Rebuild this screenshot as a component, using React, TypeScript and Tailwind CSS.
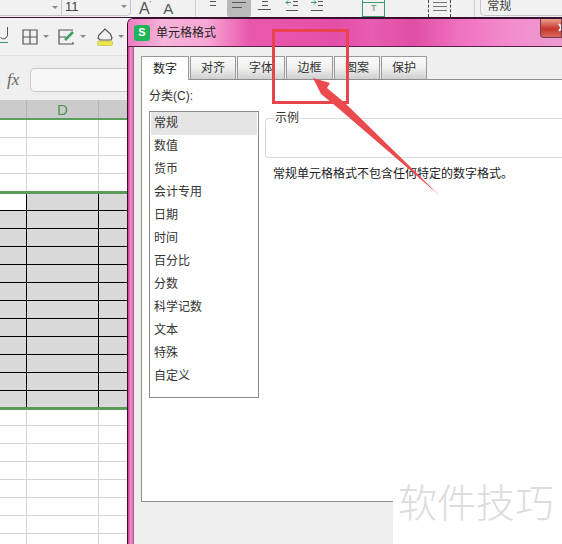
const categories = ["常规", "数值", "货币", "会计专用", "日期", "时间", "百分比", "分数", "科学记数", "文本", "特殊", "自定义"];
const tabs = [
  { label: "对齐", w: "w-[46px]" },
  { label: "字体", w: "w-[48px]" },
  { label: "边框", w: "w-[47px]" },
  { label: "图案", w: "w-[46px]" },
  { label: "保护", w: "w-[46px]" },
];
const font = "font-['Liberation_Sans','Noto_Sans_CJK_SC',sans-serif]";

function Caret({ className = "" }: { className?: string }) {
  return <div className={`w-0 h-0 border-x-[3px] border-t-[3px] border-x-transparent border-t-[#888] ${className}`} />;
}

function Lines({ rows, className = "" }: { rows: string[]; className?: string }) {
  // tiny alignment glyphs in the ribbon
  return (
    <div className={`flex flex-col gap-[3px] ${className}`}>
      {rows.map((w, i) => (
        <div key={i} className={`h-px bg-[#555] ${w}`} />
      ))}
    </div>
  );
}

function GridRow({ h, line, first = "bg-white", rest = "bg-white", col }: { h: string; line: string; first?: string; rest?: string; col: string }) {
  return (
    <div className={`flex shrink-0 ${h} ${line}`}>
      <div className={`w-[27px] border-r ${col} ${first}`} />
      <div className={`w-[72px] border-r ${col} ${rest}`} />
      <div className={`flex-1 ${rest}`} />
    </div>
  );
}

function Sheet() {
  return (
    <div className="flex flex-col flex-1">
      <div className="flex shrink-0 h-[20px] bg-[#cbcbcb] border-b-2 border-[#5c9e5e]">
        <div className="w-[27px] border-r border-[#b5b5b5]" />
        <div className="w-[72px] border-r border-[#b5b5b5] flex items-center justify-center text-[15px] leading-none text-[#4f9153]">D</div>
      </div>
      {[0, 1, 2].map((i) => (
        <GridRow key={i} h="h-[18px]" line="border-b border-[#d4d4d4]" col="border-[#d4d4d4]" />
      ))}
      <GridRow h="h-[17px]" line="" col="border-[#d4d4d4]" />
      <div className="h-[3px] shrink-0 bg-[#5a9c58]" />
      <GridRow h="h-[17px]" line="border-b border-black" rest="bg-[#d9d9d9]" col="border-black" />
      {[0, 1, 2, 3, 4, 5, 6, 7, 8, 9].map((i) => (
        <GridRow key={i} h="h-[18px]" line="border-b border-black" first="bg-[#d9d9d9]" rest="bg-[#d9d9d9]" col="border-black" />
      ))}
      <GridRow h="h-[16px]" line="" first="bg-[#d9d9d9]" rest="bg-[#d9d9d9]" col="border-black" />
      <div className="h-[3px] shrink-0 bg-[#5a9c58]" />
      <GridRow h="h-[16px]" line="border-b border-[#d4d4d4]" col="border-[#d4d4d4]" />
      {[0, 1, 2, 3, 4, 5, 6].map((i) => (
        <GridRow key={i} h="h-[18px]" line="border-b border-[#d4d4d4]" col="border-[#d4d4d4]" />
      ))}
    </div>
  );
}

function LeftPane() {
  return (
    <div className="w-[127px] shrink-0 flex flex-col overflow-hidden">
      <div className="h-[37px] shrink-0 bg-[#f1f1f1] flex items-center">
        <svg width="9" height="17" viewBox="0 0 9 17" className="mt-[-2px]">
          <path d="M7.5 0v8a4 4 0 0 1-7 2.5" fill="none" stroke="#555" strokeWidth="1" />
          <path d="M0 15.5h8" stroke="#3f9a5d" strokeWidth="1" />
        </svg>
        <svg width="16" height="16" viewBox="0 0 16 16" className="ml-[13px]">
          <path d="M1 1h14v14H1zM8 1v14M1 8h14" fill="none" stroke="#555" strokeWidth="1.2" />
        </svg>
        <Caret className="ml-[5px]" />
        <svg width="17" height="16" viewBox="0 0 17 16" className="ml-[9px]">
          <path d="M15 1H1v14h14v-2M1 8h7" fill="none" stroke="#555" strokeWidth="1.2" />
          <path d="M7 11l8-8" stroke="#3fa066" strokeWidth="2.5" />
        </svg>
        <Caret className="ml-[5px]" />
        <svg width="18" height="18" viewBox="0 0 18 18" className="ml-[10px]">
          <path d="M9 1l5.500 5 1.500 4-1 2H4l-2-2 1-3z" fill="none" stroke="#555" strokeWidth="1.2" />
          <rect x="1.500" y="13" width="15" height="4.500" rx="1.500" fill="#ece64f" stroke="#b9b53a" strokeWidth="0.6" />
        </svg>
        <Caret className="ml-[4px]" />
      </div>
      <div className="h-[1px] shrink-0 bg-[#e0e0e0]" />
      <div className="h-[44px] shrink-0 bg-[#efefef] flex items-center pt-[3px] pl-[7px] gap-[8px]">
        <span className="font-['Liberation_Serif',serif] italic text-[17px] text-[#666] w-[15px]">fx</span>
        <div className="h-[24px] flex-1 bg-[#f7f7f7] border border-r-0 border-[#c8c8c8] rounded-l-[5px]" />
      </div>
      <Sheet />
    </div>
  );
}

function Dialog() {
  return (
    <div className="flex-1 flex flex-col bg-[linear-gradient(90deg,#c93c90_0px,#f994d2_3px,#e858ad_5px)] border-l border-t border-[#3a1030] rounded-tl-[6px] overflow-hidden">
      <div className="h-[28px] shrink-0 flex items-center bg-[linear-gradient(90deg,#ee7cc2_0%,#f6b4da_8%,#f7a8d5_18%,#ea58ae_28%,#e54ea8_48%,#e85cb2_56%,#e04ea6_66%,#f070c0_76%,#f38ccc_88%,#eb9ccf_100%)] border-b border-[#5a2048]">
        <div className="w-4 h-4 ml-[6px] rounded-[3px] bg-[#1fb45a] flex items-center justify-center text-white text-[11px] font-bold leading-none">S</div>
        <span className="ml-[6px] text-[12px] text-[#222]">单元格格式</span>
        <div className="ml-auto self-start w-[22px] h-[19px] rounded-bl-[4px] border border-t-0 border-[#7a3a4a] bg-[linear-gradient(180deg,#e9a090_0%,#c8342c_55%,#d86a60_100%)] overflow-hidden">
          <svg width="22" height="19" viewBox="0 0 22 19">
            <path d="M18 5l5 7M23 5l-5 7" stroke="#fff" strokeWidth="2" />
          </svg>
        </div>
      </div>
      <div className="flex-1 ml-[5px] bg-[#efefef] border-l border-[#8a7a85] flex flex-col">
        <div className="h-[32px] shrink-0 pl-[7px] flex items-end gap-[1px]">
          <div className="w-[48px] h-[24px] mb-[-1px] relative z-10 bg-white border border-b-0 border-[#999] flex items-center justify-center text-[12px] text-[#222]">数字</div>
          {tabs.map((t) => (
            <div key={t.label} className={`${t.w} h-[23px] bg-[linear-gradient(180deg,#fafafa_0%,#f0f0f0_50%,#cfcfcf_100%)] border border-b-0 border-[#9a9a9a] flex items-center justify-center text-[12px] text-[#333]`}>{t.label}</div>
          ))}
        </div>
        <div className="h-[423px] shrink-0 ml-[7px] bg-white border border-r-0 border-[#8e8e8e] pl-[7px] flex gap-[6px]">
          <div className="w-[110px] shrink-0">
            <div className="h-[31px] flex items-end pb-[6px] text-[12px] leading-[17px] text-[#333]">分类(C):</div>
            <div className="h-[287px] border border-[#8c8c8c] px-px">
              {categories.map((c, i) => (
                <div key={c} className={`h-[23px] pl-[3px] pb-px flex items-center text-[12px] text-[#333] ${i === 0 ? "bg-[#e5e5e5]" : ""}`}>{c}</div>
              ))}
            </div>
          </div>
          <div className="flex-1 pt-[38px]">
            <div className="h-[40px] border border-r-0 border-[#d9d9d9] rounded-l-[4px] relative">
              <span className="absolute left-[8px] top-[-9px] bg-white px-[1px] text-[12px] leading-[17px] text-[#333]">示例</span>
            </div>
            <div className="mt-[8px] ml-[8px] text-[12px] leading-[17px] text-[#222] whitespace-nowrap">常规单元格格式不包含任何特定的数字格式。</div>
          </div>
        </div>
      </div>
    </div>
  );
}

function TopStrip() {
  return (
    <div className="h-[18px] shrink-0 bg-[#f1f1f1] flex items-start relative z-10 border-b border-[#3a1030]">
      <div className="w-[131px] h-[16px] shrink-0 flex border-b border-r border-[#c5c5c5] rounded-br-[5px]">
        <div className="w-[62px] border-r border-[#c5c5c5] flex justify-end items-center pr-[3px]"><Caret /></div>
        <span className="ml-[3px] text-[13px] leading-[14px] text-[#444]">11</span>
        <Caret className="ml-auto mr-[3px] mt-[5px]" />
      </div>
      <span className="ml-[8px] text-[16px] leading-[17px] text-[#555]">A</span>
      <span className="text-[8px] leading-[8px] text-[#555]">'</span>
      <span className="ml-[12px] text-[15px] leading-[17px] text-[#555]">A</span>
      <div className="ml-[22px] w-px h-[17px] bg-[#d0d0d0]" />
      <Lines rows={["w-[6px]", "w-[6px]"]} className="ml-[14px] mt-[1px]" />
      <div className="ml-[11px] w-[24px] h-[17px] bg-[#b9b9b9] rounded-b-[3px] flex justify-center pt-[2px]">
        <Lines rows={["w-[14px]", "w-[10px]"]} className="gap-[4px]" />
      </div>
      <Lines rows={["w-[6px]", "w-[6px]", "w-[13px]"]} className="ml-[7px] mt-[1px] gap-[2px] items-center" />
      <svg width="14" height="12" viewBox="0 0 14 12" className="ml-[14px]">
        <path d="M6 2.500H1m2-2l-2 2 2 2" fill="none" stroke="#3d9a62" />
        <path d="M8 1.500h5M8 5.500h5M1 10.500h12" stroke="#555" />
      </svg>
      <svg width="14" height="12" viewBox="0 0 14 12" className="ml-[11px]">
        <path d="M1 2.500h5m-2-2l2 2-2 2" fill="none" stroke="#3d9a62" />
        <path d="M8 1.500h5M8 5.500h5M1 10.500h12" stroke="#555" />
      </svg>
      <div className="ml-[38px] w-[23px] h-[17px] border-x border-b border-[#3f9a6a] flex flex-col items-center shrink-0">
        <div className="h-[3px] w-full border-b border-[#3f9a6a]" />
        <span className="text-[9px] leading-[11px] text-[#3f9a6a]">T</span>
      </div>
      <div className="ml-[43px] w-[23px] h-[17px] border-x border-dashed border-[#444] flex flex-col items-center gap-[3px] pt-[2px] shrink-0">
        <div className="w-[14px] h-px bg-[#777]" />
        <div className="w-[14px] h-px bg-[#777]" />
        <div className="w-[14px] h-px bg-[#777]" />
      </div>
      <div className="ml-[23px] w-px h-[17px] bg-[#d0d0d0] shrink-0" />
      <div className="ml-[5px] flex-1 h-[16px] border-l border-b border-[#c5c5c5] rounded-bl-[5px] pl-[6px] text-[12px] leading-[13px] text-[#444]">常规</div>
    </div>
  );
}

export default function App() {
  return (
    <div className={`relative w-[562px] h-[544px] overflow-hidden flex flex-col bg-white ${font}`}>
      <TopStrip />
      <div className="flex flex-1 min-h-0">
        <LeftPane />
        <Dialog />
      </div>

      {/* annotation drawn on top of the screenshot */}
      <div className="absolute left-[272px] top-[29px] w-[77px] h-[75px] border-[3px] border-[#e9444c]" />
      <svg className="absolute left-0 top-0 pointer-events-none" width="562" height="544" viewBox="0 0 562 544">
        <polygon points="313,78 330,83 327,88 345,103 439,195 338,108 321,94 323,98" fill="#ea4a4e" />
      </svg>

      {/* watermark */}
      <div className="absolute right-0 bottom-0 w-[169px] h-[44px] bg-white" />
      <div className="absolute left-[398px] top-[476px] font-['Noto_Sans_CJK_SC',sans-serif] text-[39px] leading-[48px] font-light text-[#dcdcdc] whitespace-nowrap">软件技巧</div>
    </div>
  );
}
